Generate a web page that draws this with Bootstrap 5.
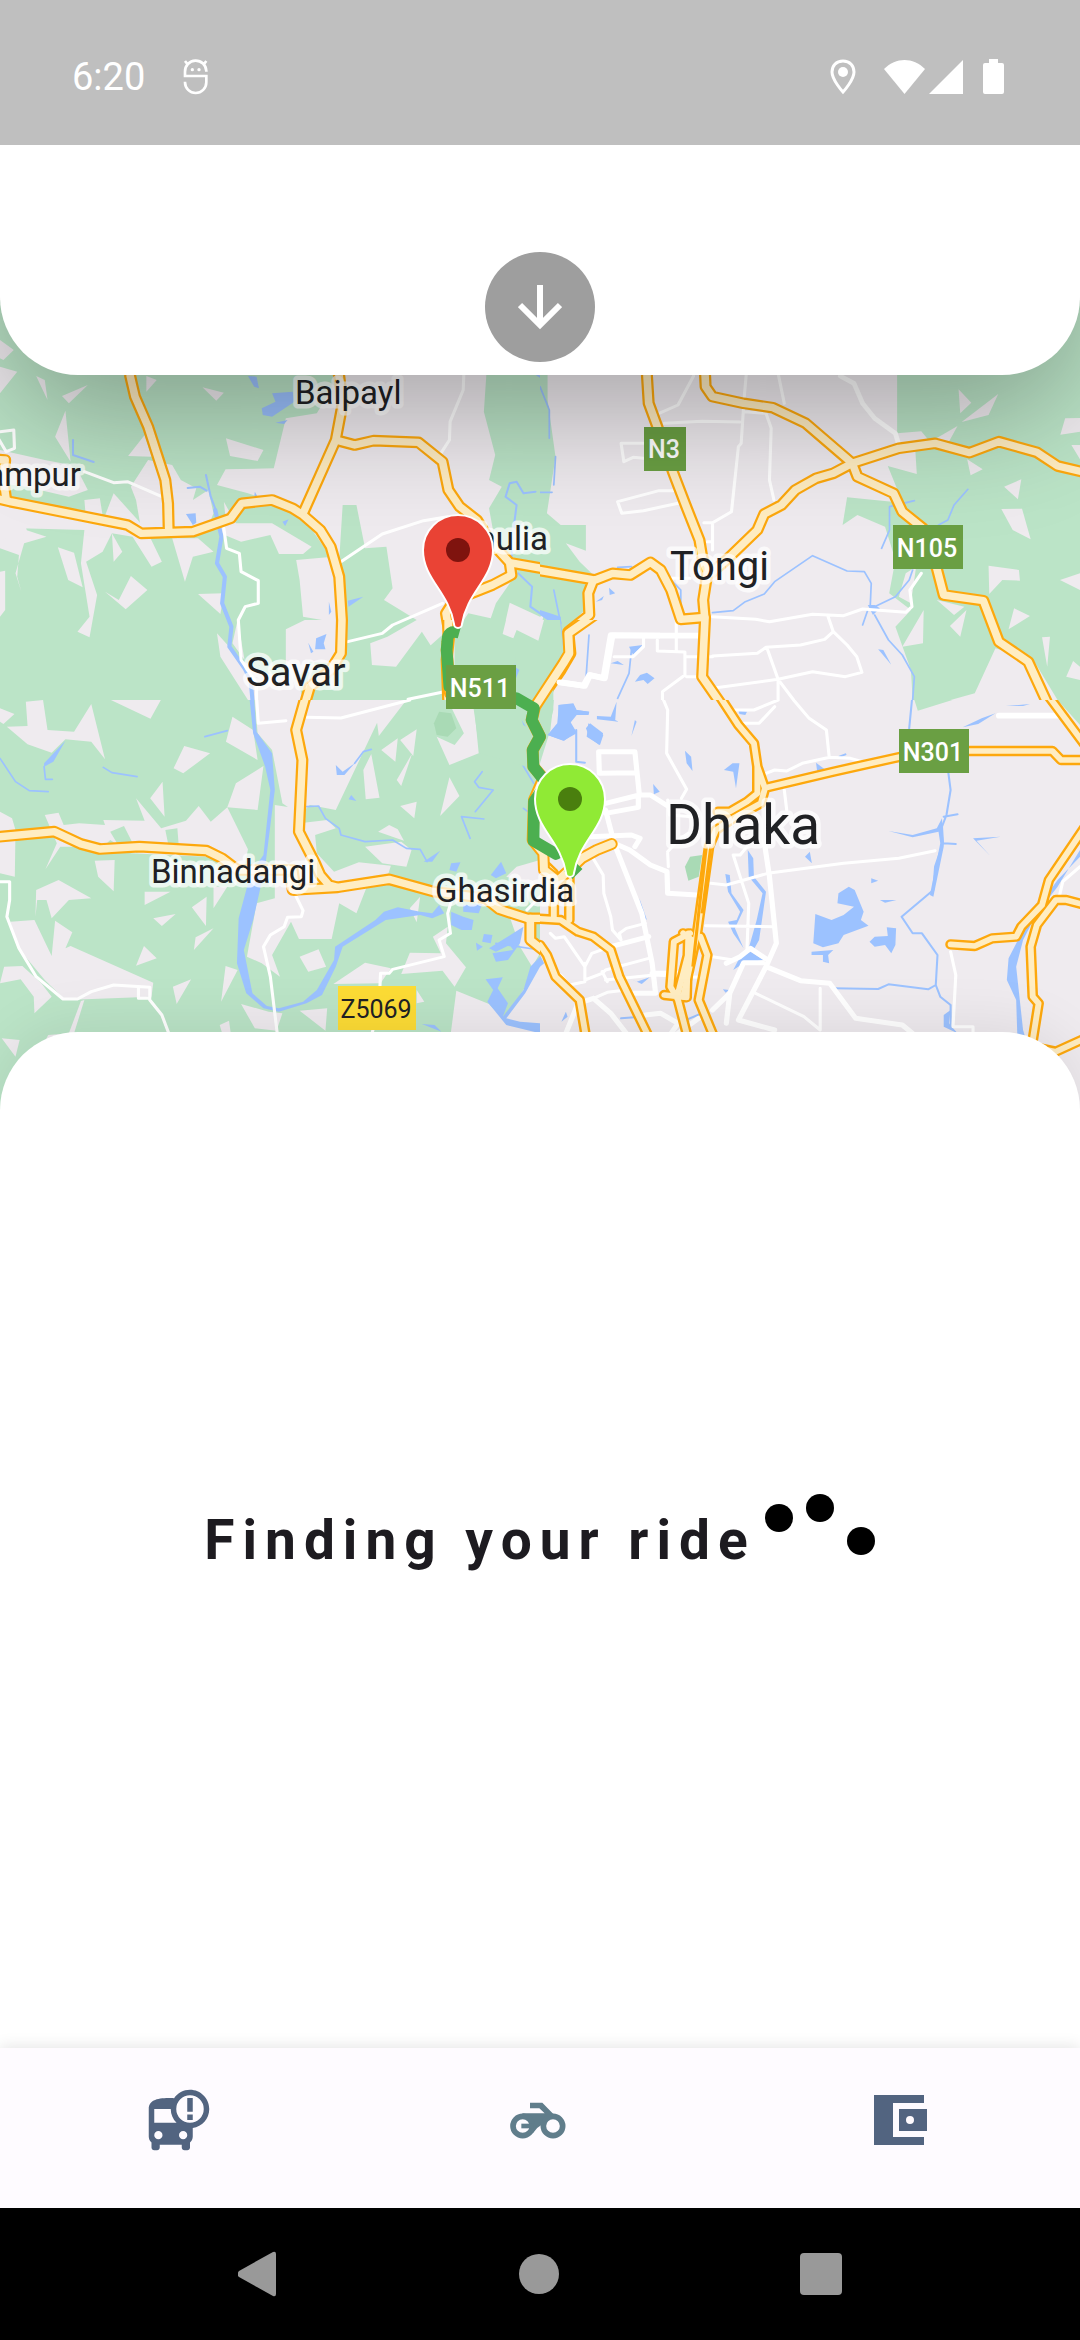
<!DOCTYPE html>
<html lang="en">
<head>
<meta charset="utf-8">
<meta name="viewport" content="width=device-width, initial-scale=1">
<title>Finding your ride</title>
<link href="https://cdn.jsdelivr.net/npm/bootstrap@5.3.0/dist/css/bootstrap.min.css" rel="stylesheet">
<style>
body{font-family:Roboto,"Noto Sans",sans-serif;color:#1d1b20;background:#fff}
.status-bar{height:145px;padding:8px 76px 0 72px;background:#bfbfbf;color:#fff;font-size:38px;line-height:44px;z-index:3}
.status-bar .notice{margin-left:38px}
.status-bar .wifi{margin-left:28px}
.status-bar .signal{margin-left:4px}
.status-bar .battery{margin-left:20px}
.top-sheet{padding:107px 0 13px;border-radius:0 0 78px 78px;box-shadow:0 40px 120px rgba(0,0,0,.3);z-index:2}
.expand-btn{width:110px;height:110px;background:#9e9e9e}
.map-area{height:810px;margin:-75px 0 -78px;background:#efebef}
.ride-sheet{border-radius:78px 78px 0 0;box-shadow:0 -4px 60px rgba(0,0,0,.09);z-index:1}
.finding{font-size:55px;line-height:66px;font-weight:700;letter-spacing:8px}
.tab-bar{height:160px;padding-bottom:16px;background:#fefbff;box-shadow:0 -2px 14px rgba(0,0,0,.1);color:#526480;z-index:2}
.tab-bar .current{color:#607d8b}
.system-bar{height:132px;padding:0 22%;color:#999}
.place{fill:#202124;stroke:#fff;stroke-opacity:.72;stroke-width:9px;stroke-linejoin:round;paint-order:stroke;font-size:33px}
.town{font-size:40px}
.city{font-size:55px}
.shield{font-size:25px;font-weight:500;fill:#fff;text-anchor:middle}
.shield-z{font-weight:400;fill:#202124}
.land{fill:#efebef}.wood{fill:#bbe4c7}.park{fill:#a9dab5}.lake{fill:#9cc2ff}
.river,.lane,.casing,.surface,.route{fill:none;stroke-linejoin:round;stroke-linecap:round}
.river{stroke:#9cc2ff;stroke-width:6}
.lane{stroke:#fff;stroke-width:9}
.wide{stroke-width:17}
.casing{stroke:#fda80d;stroke-width:35}
.surface{stroke:#ffedc2;stroke-width:22}
.route{stroke:#4caf50;stroke-width:35;stroke-linecap:butt}
</style>
<script src="https://cdn.jsdelivr.net/npm/bootstrap@5.3.0/dist/js/bootstrap.bundle.min.js" defer></script>
</head>
<body class="d-flex flex-column min-vh-100">

<header class="status-bar position-relative d-flex align-items-center justify-content-between">
  <div class="d-flex align-items-center">
    <span>6:20</span>
    <svg class="notice" width="26" height="36" viewBox="0 0 78 108" fill="none" stroke="#fff" stroke-width="8" aria-hidden="true"><path d="M6 55V38a32 32 0 0 1 64-2V38M6 51H70V70a32 32 0 0 1-64 0V68M14 16 6 6M62 16l8-10"/><circle cx="28" cy="32" r="5" fill="#fff" stroke="none"/><circle cx="48" cy="32" r="5" fill="#fff" stroke="none"/></svg>
  </div>
  <div class="d-flex align-items-center">
    <svg width="26" height="36" viewBox="0 0 26 36" aria-hidden="true"><path d="M13 2C6 2 2 7 2 13c0 8 11 20 11 20s11-12 11-20C24 7 20 2 13 2Z" fill="none" stroke="#fff" stroke-width="3"/><circle cx="13" cy="13" r="5" fill="#fff"/></svg>
    <svg class="wifi" width="41" height="36" viewBox="0 0 41 36" fill="#fff" aria-hidden="true"><path d="M0 10C12-2 29-2 41 10L20.500 35Z"/></svg>
    <svg class="signal" width="34" height="36" viewBox="0 0 34 36" fill="#fff" aria-hidden="true"><path d="M34 1V35H0Z"/></svg>
    <svg class="battery" width="21" height="36" viewBox="0 0 21 36" fill="#fff" aria-hidden="true"><path d="M6 0H15V4H19Q21 4 21 6V33Q21 35 19 35H2Q0 35 0 33V6Q0 4 2 4H6Z"/></svg>
  </div>
</header>

<main class="d-flex flex-column flex-grow-1">
  <section class="top-sheet position-relative bg-white d-flex justify-content-center">
    <button type="button" class="expand-btn btn rounded-circle border-0 p-0 d-flex align-items-center justify-content-center" aria-label="Show trip details">
      <svg width="44" height="46" viewBox="0 0 44 46" fill="none" stroke="#fff" stroke-width="6" aria-hidden="true"><path d="M22 1V40M2 21 22 41 42 21"/></svg>
    </button>
  </section>

  <section class="map-area overflow-hidden" aria-label="Map">
  <svg class="d-block w-100 h-100" viewBox="0 300 1080 810" preserveAspectRatio="xMidYMid slice">
    <!-- north-west tile -->
    <svg x="0" y="300" width="540" height="400" viewBox="0 -180 1568 1200" preserveAspectRatio="none">
      <rect class="wood" y="-180" width="1568" height="1200"/>
      <path class="land" d="M830 175 920 160 985 48V-180H1412V48L1405 155 1438 285 1420 360 1457 380 1420 445 1440 560 1500 640 1440 730 1425 775 1360 760 1320 820V1020H1170L1265 880 1225 815 1150 920 1080 915 1075 850 1125 830 1210 780 1115 720 1140 685 1122 560 1060 565 1035 435H995L985 600 960 590 900 500 850 445 720 400 630 375 655 328 795 325Z"/>
      <path class="land" d="M0 20 50 35 0 100ZM0-60 40-30 10 0 0-5ZM180 108 255 75 200 130ZM425 48 455 60 425 95ZM588 82 650 98 628 122ZM190 152 160 230 205 305ZM372 288 420 225 440 290ZM656 235 765 270 748 303 668 288ZM105 48 130 60 138 120ZM0 270 130 300 190 312 230 340 255 390 200 410 75 380 0 370ZM380 380 430 300 500 315 525 360 570 385 560 420 605 390 620 460 600 510 410 510 395 420ZM60 440 200 470 250 480 245 420 290 415 300 480 330 400 400 480 430 520 470 605 440 620 385 530 325 520 355 575 330 605 325 520 298 575 250 605 282 705 260 832 225 815 260 770 235 610 245 510 60 505 135 530 70 550 45 640 62 695 50 650 55 585 0 565V440ZM500 535H575L620 575 560 590 537 665ZM168 562 215 578 240 682 198 660ZM380 648 428 690 365 748 305 695 345 720ZM0 635 15 632V750L0 770ZM790 490 905 560 880 582 810 582 785 525 700 545 640 520 640 490ZM860 600 950 592 985 660 990 790 880 770 870 660ZM830 808 885 780H1000V870L960 910 900 905 860 960 830 930ZM650 425 685 490 660 520ZM1480 728 1568 770V820L1515 790 1490 835 1460 820ZM575 702 650 700 640 762ZM630 820 700 900 770 940 830 950 850 900 880 1020H720L640 890ZM690 780 675 850 710 900 700 840Z"/>
      <path class="land" d="M0 430 60 440 80 520 0 540Z"/>
      <path class="wood" d="M1100 1020 1180 920 1290 820 1310 1020Z"/>
      <path class="lake" d="M720 48 745 50 752 85 738 80ZM760 145 800 125 790 100 850 95 855 125 790 170 763 165ZM800 188 835 180 825 192ZM820 485 838 478 828 498ZM540 462 568 460 570 488 560 495ZM740 395 748 410 738 412ZM918 835 948 822 940 850 945 868 915 868ZM895 848 910 875 903 880ZM1010 722 1055 710 1012 740ZM955 725 962 755 955 765ZM1495 910 1508 930 1495 955Z"/>
      <path class="river" d="M598 345 612 410 630 460M545 384 580 380 600 392M212 240V285L272 306M1568 50 1560 45M1555 395 1520 400 1500 365 1480 370 1468 410 1500 435 1492 500 1485 600M1505 640 1545 680 1540 740 1568 760"/>
      <path class="river" style="stroke-width:12" d="M625 450 643 530 630 610 653 650 645 730 672 800 666 860 710 925 728 960 733 1020"/>
      <path class="lane" d="M245 335 330 368 370 365 470 410M650 505 658 565 695 580 700 635 750 662V730L712 740 692 780 700 900 745 970V1030M990 605 1110 522 1230 482 1300 470M1010 845 1110 820 1140 795 1285 730M1350-40 1345 90 1307 185 1305 240 1280 280M1185 1018 1290 995M0 215 40 210 42 265 18 275-5 235"/>
      <defs><g id="roads-nw"><path d="M378-60V48L392 110 430 200 455 280 480 360 488 430 490 515M-20 413 30 425 200 460 370 495 410 520 560 515 670 475 702 430 790 420 850 445 880 465 930 510 960 560 985 650 993 780 990 880 960 930 900 980 880 1050"/><path d="M960-40 985 48 995 130 975 240 880 460M975 240 1030 255 1085 242 1215 247 1285 305 1302 390 1335 440 1385 480 1420 540 1480 608 1600 630M1480 608 1485 645 1430 675 1320 720 1295 760 1305 820 1297 900 1302 1040M-20 298 15 300 10 360 18 420"/></g></defs>
      <use href="#roads-nw" class="casing"/><use href="#roads-nw" class="surface"/>
    </svg>
    <!-- north-east tile -->
    <svg x="540" y="300" width="540" height="400" viewBox="0 -180 1565 1200" preserveAspectRatio="none">
      <rect class="land" y="-180" width="1565" height="1200"/>
      <path class="wood" d="M0-180H22V120L45 290 20 460 60 495H133V572L75 550 115 605 160 650 130 750 80 800 80 880 30 1020H0ZM1035-180H1565V1020H1500L1430 900 1320 865 1260 1000 1190 1020H1080L1075 930 1030 800 1075 750 1012 700 1030 600 1000 500 920 465 877 495 890 412 1020 425 1040 400 1008 318 1092 342 1088 275 1035 265Z"/>
      <path class="land" d="M1035 220 1105 214 1130 245 1035 275ZM1213 88 1250 128 1218 160ZM1328 102 1300 165 1222 186ZM1210 198 1185 245 1140 240ZM1522 175 1565 174V215L1508 224ZM1238 298 1283 328 1248 346ZM1395 358 1385 418 1345 380ZM1337 447 1397 446 1422 538 1370 510ZM1300 617 1388 630 1391 662 1340 660 1302 702ZM1507 660 1565 640V690ZM1374 745 1420 768 1358 808ZM1236 750 1218 830 1188 798ZM1112 750 1110 850 1050 860ZM1455 832 1478 830 1470 920ZM1545 903 1565 920V960L1525 950ZM1540 255H1565V298ZM1150 720 1230 740 1200 765ZM1060 640 1090 620 1075 730 1040 710Z"/>
      <path class="land" d="M0 770 10 765 0 830Z"/>
      <path class="lake" d="M0 750 60 770 68 870 50 800 0 765ZM200 683 218 700 202 705ZM162 725 185 708 180 720ZM258 860 298 855 270 885ZM205 910 225 903 243 915ZM275 965 290 945 310 938 332 955 312 972 300 960ZM980 868 995 870 1018 914ZM950 735 970 735 985 745 965 765Z"/>
      <path class="river" style="stroke-width:5" d="M0 80 27 150V235M45 290 40 375M0 397H35M500 758 560 752 595 725 650 702 680 665 790 587 890 633 940 635 960 670 957 740M935 795 950 750 1030 710 1070 660 1080 630M970 765 1010 840 1050 885 1085 950 1080 1020M990 565 1013 510V440L1085 422M1240 388 1200 435 1182 480 1155 495M40 690 60 790M142 825 133 960M265 870 258 940 225 1015M225 622 265 620M375 655 408 690V730"/>
      <path class="lane" d="M445 48 400 135 345 160M360 190 470 184 580 186M598 40 592 110 583 250 575 260 555 455 500 488H475M500 488V570M690 40 708 130M592 155 655 160 670 205 665 360 678 420M300 250H235L243 305 270 292 300 295M385 392 345 392 225 425 237 460 300 452 400 430M485 545H500M500 770 625 778 665 785 790 763 880 767 935 747 1060 757 1078 740 1072 690 1105 640M500 888 630 880 655 862 755 855 825 838 850 815 835 770M850 815 890 855 918 890 933 937 885 950 790 935 690 958 500 985M658 865 690 958 735 1020M690 958V1020M300 830 300 860 270 890H215M340 840V873L420 876V945L355 995V1020M395 780V870M420 890H500M425 950H460M380 655 435 655"/>
      <path class="lane" style="stroke-width:14" d="M870 48 910 70 935 130 970 175 1030 220 1040 255"/>
      <path class="lane wide" d="M465 827H210L188 955 145 945 130 978 50 965"/>
      <defs><g id="roads-ne"><path d="M310-40V48L315 130 340 200 385 335 420 430 462 540 470 590 485 640 473 720 478 780 470 950 530 1040M475-30 480 80 500 110 590 130 675 143 770 190 905 310 920 350 1025 400 1050 455 1110 505 1150 625 1170 705 1285 722 1330 845 1415 905 1475 1040"/><path d="M905 310 1040 265 1145 250 1245 278 1330 245 1440 277 1500 318 1590 340M905 310 850 340 800 355 740 390 700 435 650 462 630 510 540 600 495 640M-20 628 160 660 210 640 262 645 320 607 350 630 380 690 408 778 478 772M155 660 140 700 143 765 82 815 88 880 60 930 0 1020"/></g></defs>
      <use href="#roads-ne" class="casing"/><use href="#roads-ne" class="surface"/>
    </svg>
    <!-- south-west tile -->
    <svg x="0" y="700" width="540" height="410" viewBox="0 0 1568 1230" preserveAspectRatio="none">
      <rect class="wood" width="1568" height="1230"/>
      <path class="land" d="M75 5 125 0 138 90 215 95 265 12 305 178 265 125 190 118 150 158 80 133 20 80 80 78ZM0 25 42 42 10 72 0 65ZM322 0H467L437 56ZM675 50 735 90 748 180 656 125ZM535 138 610 160 532 220 504 205ZM472 245 478 350 436 295ZM765 198 748 330 660 322 685 250ZM395 295 468 385 540 362 577 318 612 365 660 322 720 448 710 500 600 470 380 460 320 420 280 460 230 440 175 440 132 508 165 430 130 345 170 338 185 375 230 370 305 375 300 360 420 362ZM0 335 35 355 45 390 43 530 0 520ZM275 482 333 480 330 574 285 530ZM105 570 170 540 265 595 200 600 150 655 135 600 108 600 103 650ZM420 575 495 575 420 615ZM600 590 598 678 557 622ZM445 655 510 642 470 678ZM620 685 563 750 568 712ZM160 662 210 697 190 745 205 738 445 848 440 890 190 900 130 840 50 740 30 665 100 660 150 768ZM12 800 65 798 120 850 150 890 100 940 98 890 60 838 0 850ZM418 738 455 775 395 797ZM502 860 555 838 513 912ZM655 798 690 810 642 905ZM245 900 235 903 200 1000 215 1000ZM638 975 665 962 670 1000H645ZM700 912 780 935 820 940 803 992 740 985ZM870 932 950 925 945 992ZM5 1015 57 1020 45 1070ZM125 1035 140 1005 220 998ZM740 0H1180L1100 108 1095 68 1030 210 975 330 900 315 870 345 820 310 790 150 748 100ZM798 315 860 325 870 370 950 360 975 385 915 405 920 460 970 515 1042 487 1135 497 1120 545 1065 560 1035 640 985 610 963 717H868L845 665 790 765 813 830 760 790 717 770 745 610 798 595ZM1300 0H1375L1390 160 1305 195 1268 110 1320 135 1347 100ZM1155 115 1148 185 1107 150ZM1210 88 1200 168 1162 120ZM1197 160 1165 258 1152 240ZM1078 162 1102 293 1062 298 1055 210ZM1305 232 1334 288 1278 348ZM1210 305 1203 355 1162 318ZM1130 375 1155 388 1173 422 1098 395ZM1060 440 1165 425 1195 450 1180 500 1110 490ZM1220 590 1210 667 1190 625ZM925 748 947 800 895 815 870 770ZM1060 788 1135 805 1105 850 968 852ZM1190 758 1280 760 1257 710 1300 680 1295 730 1353 802 1320 860 1285 812 1165 822ZM1210 870 1232 905 1210 910ZM1325 872 1420 912 1465 960 1568 790V1230H1280ZM1380 605 1540 640 1568 760 1545 800 1510 740 1480 650ZM1568 480 1500 500 1470 530 1568 560ZM620 560 660 560 620 625Z"/>
      <path class="wood" d="M320 395 360 378 400 460 340 430ZM480 390 515 385 520 450 490 440Z"/>
      <path class="park" d="M1275 35 1310 40 1325 85 1300 110 1268 105 1260 70Z"/>
      <path class="lake" d="M725 0H738L745 95 790 160 798 270 770 500 735 660 708 750 733 880 775 918 810 925 880 905 920 870 970 780 973 740 1090 660 1115 635 1155 622 1220 635 1255 640 1275 615 1290 640 1255 655 1220 645 1120 660 995 740 975 800 935 885 890 910 810 935 765 925 715 880 688 790 693 655 728 520 765 465 785 270 770 200 735 100ZM1310 490 1337 487 1325 515 1305 510ZM1425 525 1455 485 1470 520 1440 535ZM1310 635 1345 650 1375 660 1370 690 1340 690 1310 675ZM1345 615 1400 612 1390 640 1345 635ZM1410 838 1460 832 1445 865 1475 910 1460 950 1520 870 1540 800 1568 770V800L1525 880 1470 955 1510 965 1568 970V1000L1470 975 1415 905 1432 870ZM1405 702 1430 705 1425 730 1400 725ZM1382 728 1402 740 1385 752ZM1420 745 1520 680 1510 730 1475 780 1440 785 1430 760 1490 750 1480 735 1440 755ZM190 122 155 185 128 200 128 190ZM975 195 995 215 1030 190 1000 225H978ZM1020 285 1035 303 1012 298ZM1225 972 1262 975 1282 995ZM1230 485 1278 452 1255 485ZM1515 45 1530 100 1520 75Z"/>
      <path class="river" style="stroke-width:5" d="M0 175 45 245 85 272 140 275M128 200 132 238H152M300 202 325 218 398 230M595 110 660 92M1030 190 1055 155 1078 148M890 320 925 318 945 355 985 385 990 405 1060 425 1140 420 1180 445 1220 448 1240 485M1400 215 1378 245 1390 262 1432 270 1380 335M1405 357 1340 350 1365 415M1515 190 1550 250M1520 325 1540 340M1440 730 1568 750"/>
      <path class="lane" d="M745-10 750 70 830 62M890 52 990 54 1190 0M860 590 880 632 875 650 835 652 825 680 785 705 765 740 785 830 805 1000M-5 545H28V600L20 650 55 745 105 830 183 897H225L265 875 330 855 435 862V895H402V865M435 900 470 945 490 1000M1310 605 1300 640 1308 700 1275 720 1290 770 1140 808 1130 820H1105L1100 930 1080 1000M1568 590 1530 630"/>
      <defs><g id="roads-sw"><path d="M890-20 860 90 878 180 868 395 915 490 930 525 955 555 980 562 1130 538 1260 575 1410 595 1450 628 1530 655 1600 655M845 540 850 570 980 562"/><path d="M-20 412 158 395 235 432 290 447 405 440 600 452 645 475 690 510 850 510 858 570M1540 655V720L1600 770M1590 20 1550 40 1565 90"/></g></defs>
      <use href="#roads-sw" class="casing"/><use href="#roads-sw" class="surface"/>
    </svg>
    <!-- south-east tile -->
    <svg x="540" y="700" width="540" height="410" viewBox="0 0 1565 1230" preserveAspectRatio="none">
      <rect class="land" width="1565" height="1230"/>
      <path class="wood" d="M0 0H40L30 90 0 190ZM1085 0H1195L1095 32ZM1500 0H1565V75Z"/>
      <path class="park" d="M420 500 435 470 470 465 460 530 430 542Z"/>
      <path class="lake" d="M55 15 95 12 105 30 142 35 140 45 105 45 85 60 105 95 70 122 22 105 50 70ZM145 70 183 100 172 135 145 115 133 85ZM165 48 205 50 222 5 218 60 228 65 165 58ZM275 60 280 65 265 108ZM575 32 600 35 595 45 578 42ZM420 152 438 170 442 213 425 190ZM533 210 558 190 578 190 568 265 560 215ZM328 252 347 275 330 283ZM800 188 828 210 803 212ZM768 470 782 455 788 490ZM602 450 618 475 620 530 655 575 635 720 620 748 605 745 628 660 645 580 605 530ZM537 522 550 525 555 580 590 630 565 685 590 745 560 700 545 665 570 660 580 635 545 575ZM798 642 845 660 880 645 910 620 862 610 865 580 895 560 912 570 938 635 930 660 952 677 880 705 865 730 820 742 792 730ZM787 755 850 750 835 765 838 790 820 785V765H787ZM955 725 970 710 1008 708 1005 682 1032 685 1030 735 1018 760 1000 735 970 740ZM960 535 980 542 960 550ZM985 600 1033 600 1000 608ZM580 770 610 755 648 780 590 790 560 810ZM1565 450 1500 560 1440 640 1400 720 1380 800 1400 990 1420 1060 1385 1060 1380 900 1353 840 1358 775 1395 700 1430 640 1500 540 1565 470ZM258 835 280 845 318 832 295 852ZM530 868 548 870 538 878ZM62 965 75 935 80 950ZM288 595 310 660 300 650ZM1010 393 1080 405 1150 385 1165 355 1170 440 1140 590 1130 585 1160 430 1155 395 1080 412ZM1255 415 1335 410 1265 422 1305 468ZM1170 945 1190 930 1185 970 1210 1000 1170 980ZM1350 18 1420 12 1400 18ZM1225 82 1280 55 1320 40 1270 72ZM0 765 12 790 0 800Z"/>
      <path class="river" d="M1078 0 1070 85M1183 215 1190 270 1178 345 1165 380 1168 430 1145 500 1140 570 1048 650 1080 700H1107L1152 765 1147 855 1160 890 1190 915V980M850 865 980 867 1010 853 1125 868 1147 855M1170 350 1210 343M1170 430 1205 432M105 90V185L130 188M400 970 480 935M235 955 275 952M868 170 885 163"/>
      <path class="lane" d="M358 0 370 30 367 160 425 268 410 295M560 30H620L690 0M590 70H635L680 20M735 0 780 55 830 90 838 170M655 220 680 210 715 213 760 190 840 172 900 175 935 185M708 270 715 330M370 300 375 345 440 350M495 550 540 555 660 520 880 490 1040 475 1145 452M560 465 580 530 605 610 600 745M560 465 580 465 600 440M480 677 680 680M145 460 183 525 185 580 205 650 210 690 235 720 230 700 250 685 305 670M30 700 45 715 70 710 130 800 150 760 205 740M130 790V845L85 855 60 825M130 840 180 820 190 810 315 775M190 840 330 825 460 832M155 895 195 877 250 870M370 460 372 500M430 400 400 420 370 455M625 880 765 950 812 990V865M1190 755 1205 825 1197 980H1255V1020M1565 500 1515 545 1505 590M180 815 195 845M500 770 560 780"/>
      <path class="lane" style="stroke-width:15" d="M170 155H275L288 285 190 310M170 155 172 220 280 218M190 340 285 322V285H320L370 318M145 410 265 405 290 415 275 440M215 430 260 450 320 495 368 515 370 580 455 585M652 440 665 530 685 730 655 800 575 960 680 990M190 330 215 430 295 640 325 790 335 880H270M205 740 315 710M325 820H440M655 800 755 842 840 850 915 955 1050 975 1080 1000M645 788H590L550 880 500 930M540 790 580 770 610 745 660 780M155 895 205 940 250 1000M155 895 110 910 75 1000M305 945 350 940 400 970 380 1000M460 955 400 1000M550 880 540 970"/>
      <path class="lane wide" d="M1330 47H1500"/>
      <defs><g id="roads-se"><path d="M515-20 575 75 620 130 630 200 652 265 640 310 560 355 510 390 490 440 455 700 415 890M630 200V280L600 305 550 335 515 335M660 262 850 215 1045 170M1245 153H1485L1510 180H1600M1475-10 1590 150M-20 655 60 660 110 695 155 710 205 750 230 830 315 1010M0 735 20 765 45 830 115 900 133 1010M0 490 20 500 40 520V650M85 530V660"/><path d="M435 700 388 725 378 860 400 900 425 1000M415 700 440 720 400 880M465 710 485 765 460 900 500 1000M360 885 425 892 430 700M1190 733 1260 738 1310 715 1380 710 1395 680 1455 615 1475 540 1580 380M1580 615 1525 600H1495L1440 675 1422 740 1428 890 1445 910 1425 1040 1495 1055 1590 1010"/></g></defs>
      <use href="#roads-se" class="casing" style="stroke-width:31"/><use href="#roads-se" class="surface" style="stroke-width:17"/>
      <path d="M482 440 462 620 443 800M495 440 470 640" fill="none" stroke="#fda80d" stroke-width="9"/>
    </svg>
    <!-- booked route between the two pins -->
    <svg x="400" y="620" width="260" height="290" viewBox="0 0 780 870">
      <path class="wood" d="M180 0H480L490 90 460 130 460 270 420 420 380 440 240 400 220 260 350 220 345 100 180 100Z"/>
      <path class="land" d="M318 0 308 42 340 55 350 30 415 62 432 0Z"/>
      <path class="lake" d="M475 255 520 250 530 270 568 275 565 285 530 285 510 310 530 340 490 362 443 345 475 310ZM565 310 610 345 600 375 560 350ZM345 140 358 150 348 175ZM365 300 378 320 370 315Z"/>
      <defs><g id="roads-mid"><path d="M590-20 505 40 508 100 490 130 405 260 395 300 420 350 398 390 400 440 430 475 402 540 398 660 430 700 432 750 465 775"/><path d="M145-20V45L140 90 150 220M465 790 545 715 590 690 635 672"/></g></defs>
      <use href="#roads-mid" class="casing" style="stroke-width:36"/><use href="#roads-mid" class="surface" style="stroke-width:24"/>
      <path class="route" d="M178 38Q142 28 142 65L140 90 148 200 220 215 350 235 402 265 395 300 420 350 398 390 400 440 440 490 402 545 400 662 468 702 490 690M505 765 535 735"/>
      <path class="lane wide" d="M478 187 550 197 568 165 610 175 632 45 780 47"/>
    </svg>

    <g class="place">
      <text x="295" y="404">Baipayl</text>
      <text x="81" y="486" text-anchor="end">ampur</text>
      <text x="548" y="550" text-anchor="end">Ashulia</text>
      <text x="151" y="883">Binnadangi</text>
      <text x="435" y="902">Ghasirdia</text>
      <text class="town" x="246" y="686">Savar</text>
      <text class="town" x="670" y="580">Tongi</text>
      <text class="city" x="666" y="844">Dhaka</text>
    </g>
    <g fill="#6a9f43">
      <rect x="644" y="427" width="42" height="44"/><rect x="893" y="525" width="70" height="44"/><rect x="446" y="665" width="70" height="44"/><rect x="899" y="729" width="70" height="44"/>
    </g>
    <rect x="338" y="986" width="78" height="44" fill="#fddc35"/>
    <g class="shield">
      <text x="664" y="458">N3</text><text x="927" y="557">N105</text><text x="480" y="697">N511</text><text x="933" y="761">N301</text>
      <text class="shield-z" x="376" y="1018">Z5069</text>
    </g>
    <defs><path id="pin" d="M-35 0A35 35 0 0 1 35 0C35 29 9 42 4 74A4 4 0 0 1-4 74C-9 42-35 29-35 0Z" stroke="#fff" stroke-width="2"/></defs>
    <g transform="translate(458 550)"><use href="#pin" fill="#ea4335"/><circle r="12" fill="#7f130e"/></g>
    <g transform="translate(570 799)"><use href="#pin" fill="#90ea35"/><circle r="12" fill="#4a7f0e"/></g>
  </svg>
  </section>

  <section class="ride-sheet position-relative bg-white flex-grow-1 d-flex align-items-center justify-content-center" role="status">
    <span class="finding">Finding your ride</span>
    <svg class="ms-2" width="112" height="92" viewBox="0 0 112 92" aria-hidden="true"><circle cx="15" cy="24" r="14"/><circle cx="56" cy="14" r="14"/><circle cx="97" cy="47" r="14"/></svg>
  </section>
</main>

<nav class="tab-bar position-relative d-flex align-items-center" aria-label="Main">
  <a class="col d-flex justify-content-center text-reset" href="#alerts" aria-label="Bus alerts"><svg width="66" height="66" viewBox="0 0 24 24" fill="currentColor"><path fill-rule="evenodd" d="M16 1c-2.400 0-4.520 1.210-5.780 3.050C9.840 4 9.420 4 9 4c-4.420 0-8 .5-8 4v10c0 .88.39 1.670 1 2.220V22c0 .55.45 1 1 1h1c.55 0 1-.45 1-1v-1h8v1c0 .55.45 1 1 1h1c.55 0 1-.45 1-1v-1.780c.61-.55 1-1.340 1-2.220v-3.080c3.390-.49 6-3.390 6-6.920 0-3.870-3.130-7-7-7zM4.500 19a1.500 1.500 0 1 1 0-3 1.500 1.500 0 0 1 0 3zM3 13V8h6c0 1.960.81 3.730 2.110 5H3zm10.500 6a1.500 1.500 0 1 1 0-3 1.500 1.500 0 0 1 0 3zm2.500-6a5 5 0 1 1 0-10 5 5 0 0 1 0 10zm-1-9h2v5h-2V4zm0 6h2v2h-2v-2z"/></svg></a>
  <a class="col d-flex justify-content-center current" href="#rides" aria-label="Rides" aria-current="page"><svg width="56" height="37" viewBox="0 0 168 111" fill="currentColor"><path d="M60 2H97L130 36 95 68Q80 76 70 92L20 60 38 34H104L88 19H60Z"/><g fill="#fefbff" stroke="currentColor" stroke-width="17"><circle cx="38" cy="72" r="29"/><circle cx="129" cy="72" r="29"/></g><path d="M34 65H70V79H34Z"/></svg></a>
  <a class="col d-flex justify-content-center ps-1 text-reset" href="#wallet" aria-label="Wallet"><svg width="54" height="50" viewBox="0 0 54 50" fill="currentColor"><path fill-rule="evenodd" d="M0 0H50V8H19V42H50V50H0ZM25 14H53V36H25ZM36 21a4 4 0 1 0 0 8 4 4 0 0 0 0-8Z"/></svg></a>
</nav>

<footer class="system-bar bg-black d-flex align-items-center justify-content-between">
  <button type="button" class="btn p-0 border-0 text-reset d-flex" aria-label="Back"><svg width="40" height="46" viewBox="0 0 40 46" fill="currentColor"><path d="M35 1Q38 0 38 3V43Q38 46 35 45L1 26Q-2 23 1 20Z"/></svg></button>
  <button type="button" class="btn p-0 border-0 text-reset d-flex" aria-label="Home"><svg width="40" height="40" viewBox="0 0 40 40" fill="currentColor"><circle cx="20" cy="20" r="20"/></svg></button>
  <button type="button" class="btn p-0 border-0 text-reset d-flex" aria-label="Recent apps"><svg width="42" height="42" viewBox="0 0 42 42" fill="currentColor"><rect width="42" height="42" rx="4"/></svg></button>
</footer>
</body>
</html>
